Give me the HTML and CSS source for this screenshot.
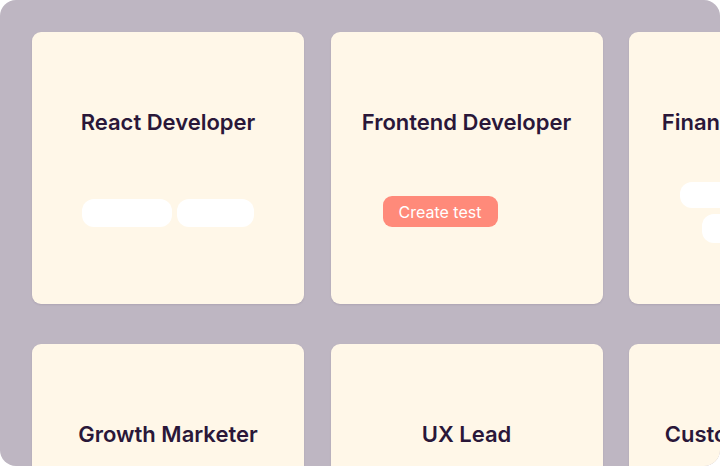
FILE: index.html
```html
<!DOCTYPE html>
<html lang="en">

<head>
    <meta charset="UTF-8">
    <meta name="viewport" content="width=device-width, initial-scale=1.0">
    <title>Roles</title>
    <link rel="stylesheet" href="styles.css">
</head>

<body>
    <div class="board">
        <div class="grid">
            <div class="card">
                <h3>React Developer</h3>
                <div class="tags">
                    <span class="pill wide"></span>
                    <span class="pill"></span>
                </div>
            </div>
            <div class="card">
                <h3>Frontend Developer</h3>
                <div class="tags shifted">
                    <button class="create">Create test</button>
                </div>
            </div>
            <div class="card">
                <h3>Financial Controller</h3>
                <div class="tags stacked">
                    <span class="pill"></span>
                    <span class="pill lower"></span>
                </div>
            </div>

            <div class="card">
                <h3>Growth Marketer</h3>
            </div>
            <div class="card">
                <h3>UX Lead</h3>
            </div>
            <div class="card">
                <h3>Customer Success</h3>
            </div>
        </div>
    </div>
</body>

</html>
```

FILE: styles.css
```css
html,
body {
    margin: 0;
    height: 100%;
}

body {
    font-family: Inter, 'Noto Sans', sans-serif;
    overflow: hidden;
}

.board {
    width: 720px;
    height: 466px;
    background-color: #beb6c2;
    border-radius: 16px;
    overflow: hidden;
}

.grid {
    display: grid;
    grid-template-columns: repeat(3, 272px);
    column-gap: 26.5px;
    row-gap: 40px;
    padding: 32px 0 0 32px;
}

.card {
    height: 272px;
    background-color: #fff7e8;
    border-radius: 9px;
    box-shadow: 0 1px 2px rgba(60, 40, 70, 0.12);
    display: flex;
    flex-direction: column;
    align-items: center;
}

.card h3 {
    margin: 77px 0 0;
    font-size: 22px;
    line-height: 26px;
    font-weight: 600;
    color: #2a1739;
    white-space: nowrap;
}

.tags {
    display: flex;
    gap: 5px;
    margin-top: 64px;
}

.pill {
    display: block;
    width: 77px;
    height: 28px;
    background-color: #fff;
    border-radius: 12px;
}

.pill.wide {
    width: 90px;
}

.tags.shifted {
    align-self: flex-start;
    margin-top: 61px;
    margin-left: 52px;
}

.tags.stacked {
    flex-direction: column;
    align-self: flex-start;
    gap: 6px;
    margin-top: 47px;
    margin-left: 51px;
}

.tags.stacked .pill {
    width: 90px;
    height: 26px;
}

.tags.stacked .pill.lower {
    margin-left: 22px;
    height: 29px;
}

.create {
    font-family: Inter, 'Noto Sans', sans-serif;
    font-size: 16px;
    color: #fff;
    background-color: #ff8a7a;
    border: none;
    border-radius: 9px;
    width: 115px;
    height: 31px;
    padding: 0;
}
```
